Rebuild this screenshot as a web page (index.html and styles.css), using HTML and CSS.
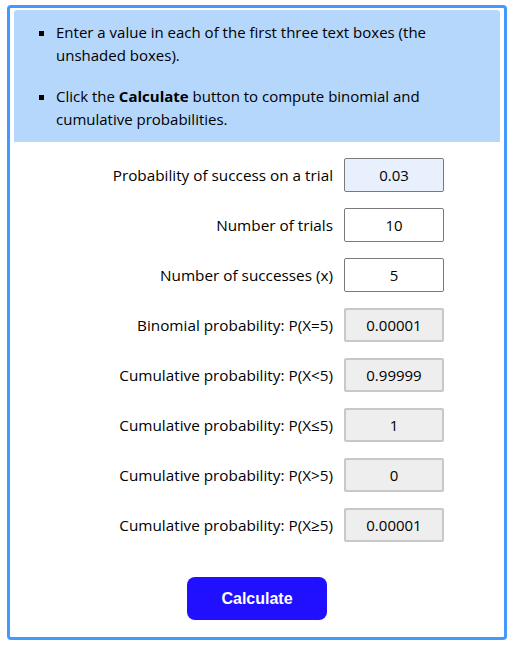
FILE: index.html
```html
<!DOCTYPE html>
<html lang="en">
<head>
    <meta charset="UTF-8">
    <meta name="viewport" content="width=device-width, initial-scale=1.0">
    <title>Binomial Probability Calculator</title>
    <link rel="stylesheet" href="styles.css">
</head>
<body>
    <div class="calculator">
        <ul class="instructions">
            <li>Enter a value in each of the first three text boxes (the unshaded boxes).</li>
            <li>Click the <b>Calculate</b> button to compute binomial and cumulative probabilities.</li>
        </ul>
        <div class="fields">
            <label for="prob">Probability of success on a trial</label>
            <input type="text" id="prob" class="entry filled" value="0.03">
            <label for="trials">Number of trials</label>
            <input type="text" id="trials" class="entry" value="10">
            <label for="succ">Number of successes (x)</label>
            <input type="text" id="succ" class="entry" value="5">
            <label for="p-eq">Binomial probability: P(X=5)</label>
            <input type="text" id="p-eq" class="result" value="0.00001" readonly>
            <label for="p-lt">Cumulative probability: P(X&lt;5)</label>
            <input type="text" id="p-lt" class="result" value="0.99999" readonly>
            <label for="p-le">Cumulative probability: P(X&le;5)</label>
            <input type="text" id="p-le" class="result" value="1" readonly>
            <label for="p-gt">Cumulative probability: P(X&gt;5)</label>
            <input type="text" id="p-gt" class="result" value="0" readonly>
            <label for="p-ge">Cumulative probability: P(X&ge;5)</label>
            <input type="text" id="p-ge" class="result" value="0.00001" readonly>
        </div>
        <div class="actions">
            <button type="button">Calculate</button>
        </div>
    </div>
</body>
</html>
```

FILE: styles.css
```css
body {
    font-family: 'Open Sans', 'Noto Sans', sans-serif;
    margin: 5px 6px 0 7px;
    color: #000;
    background: #fff;
}
.calculator {
    border: 3px solid #4499ff;
    border-radius: 4px;
    padding: 2px 4px 17px 4px;
}
.instructions {
    margin: 0;
    padding: 11px 20px 11px 42px;
    background: #b5d7fc;
    border-radius: 3px 3px 0 0;
    list-style: square;
    font-size: 15px;
    line-height: 23px;
}
.instructions li {
    margin-bottom: 18px;
}
.instructions li:last-child {
    margin-bottom: 0;
}
.fields {
    display: grid;
    grid-template-columns: 1fr 100px;
    column-gap: 11px;
    row-gap: 16px;
    align-items: center;
    margin: 16px 56px 0 0;
    font-size: 15.3px;
}
.fields label {
    text-align: right;
}
.fields input {
    box-sizing: border-box;
    width: 100px;
    height: 34px;
    font-family: inherit;
    font-size: 15px;
    text-align: center;
    color: #000;
    border-radius: 2px;
    padding: 0;
}
.entry {
    border: 1px solid #7a7a7a;
    background: #fff;
}
.entry.filled {
    background: #e8f0fe;
}
.result {
    border: 2px solid #c8c8c8;
    background: #eeeeee;
}
.actions {
    text-align: center;
    margin-top: 35px;
}
button {
    width: 140px;
    height: 43px;
    background: #2010ff;
    color: #fff;
    border: none;
    border-radius: 8px;
    font-family: 'Liberation Sans', Arial, sans-serif;
    font-weight: bold;
    font-size: 16px;
    cursor: pointer;
}
```
